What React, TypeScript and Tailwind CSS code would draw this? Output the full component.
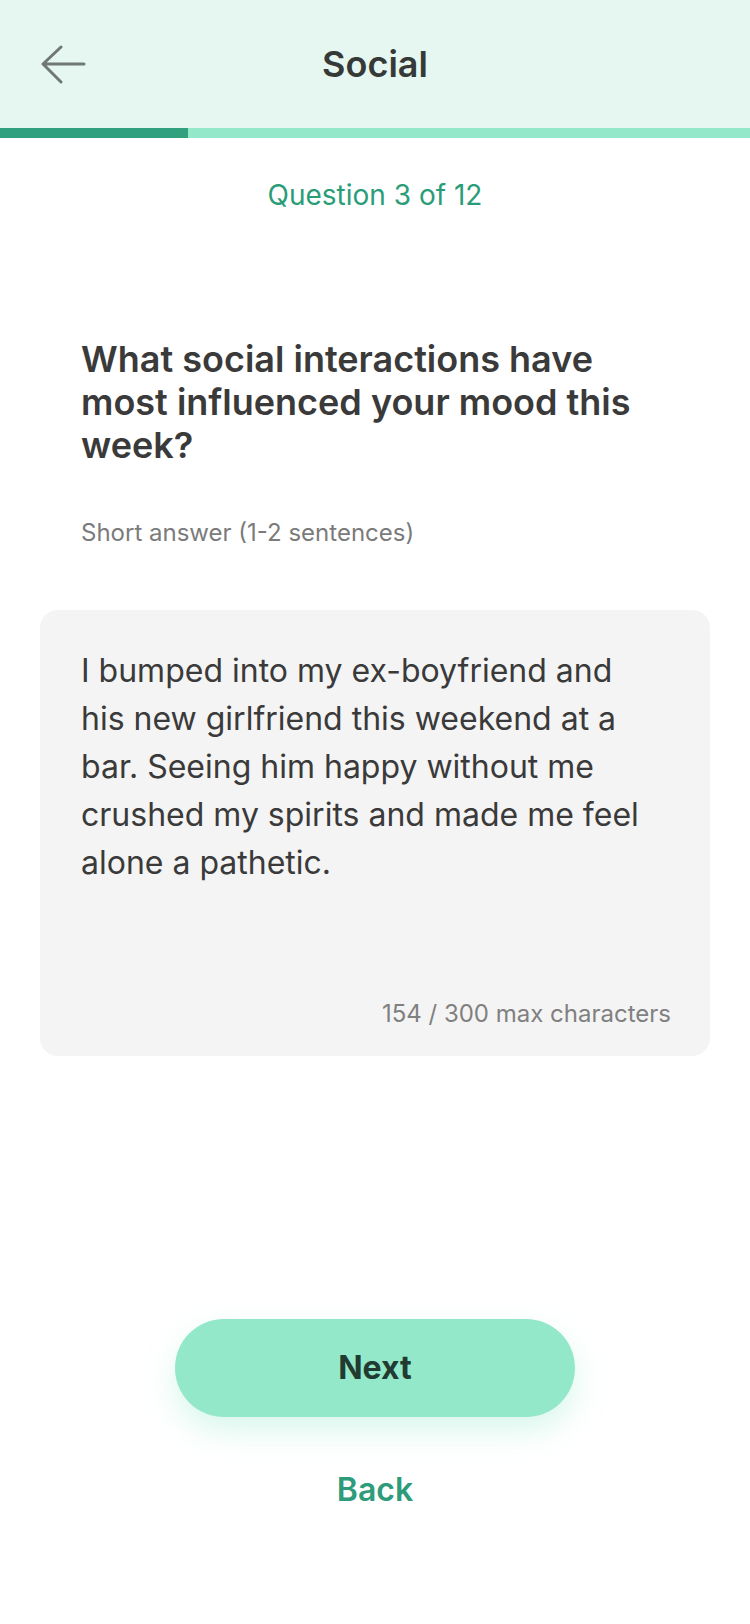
import React from 'react';

const answer =
  'I bumped into my ex-boyfriend and his new girlfriend this weekend at a bar. Seeing him happy without me crushed my spirits and made me feel alone a pathetic.';

function BackArrow() {
  return (
    <svg width="46" height="40" viewBox="0 0 46 40" fill="none">
      <path
        d="M44 19H3M21 2L3 19L21 37"
        stroke="#707874"
        strokeWidth="3"
        strokeLinecap="round"
        strokeLinejoin="round"
      />
    </svg>
  );
}

export default function App() {
  return (
    <div className="min-h-[1624px] w-[750px] bg-white font-['Inter',sans-serif]">
      {/* header */}
      <div className="grid h-[128px] grid-cols-[1fr_auto_1fr] items-center bg-[#e5f7f0]">
        <div className="pl-[40px] pt-[2px]">
          <BackArrow />
        </div>
        <h1 className="text-[36px] font-semibold text-[#353937]">Social</h1>
        <div />
      </div>
      <div className="flex h-[10px] bg-[#93e8c9]">
        <div className="w-[188px] bg-[#31a07f]" />
      </div>

      <p className="mt-[40px] text-center text-[28px] leading-[34px] text-[#2a9d78]">Question 3 of 12</p>

      <div className="px-[81px] pt-[126px]">
        <h2 className="text-[36px] font-semibold leading-[43px] text-[#3a3a3a]">
          What social interactions have most influenced your mood this week?
        </h2>
        <p className="mt-[51px] text-[24px] leading-[30px] text-[#7b7b7b]">Short answer (1-2 sentences)</p>
      </div>

      <div className="mx-[40px] mt-[62px] flex h-[446px] flex-col rounded-[18px] bg-[#f4f4f4] pl-[41px] pr-[30px] pt-[37px] pb-[27px]">
        <p className="w-[570px] text-[32px] leading-[48px] text-[#3a3a3a]">{answer}</p>
        <p className="mt-auto self-end pr-[9px] text-[24px] leading-[30px] text-[#808080]">154 / 300 max characters</p>
      </div>

      <div className="mt-[263px] flex flex-col items-center">
        <button className="h-[98px] w-[400px] rounded-full bg-[#93e8c9] text-[32px] font-bold text-[#213b31] shadow-[0_14px_30px_rgba(147,232,201,0.35)]">
          Next
        </button>
        <button className="mt-[53px] text-[32px] font-semibold leading-[40px] text-[#2e9b7b]">Back</button>
      </div>
    </div>
  );
}
